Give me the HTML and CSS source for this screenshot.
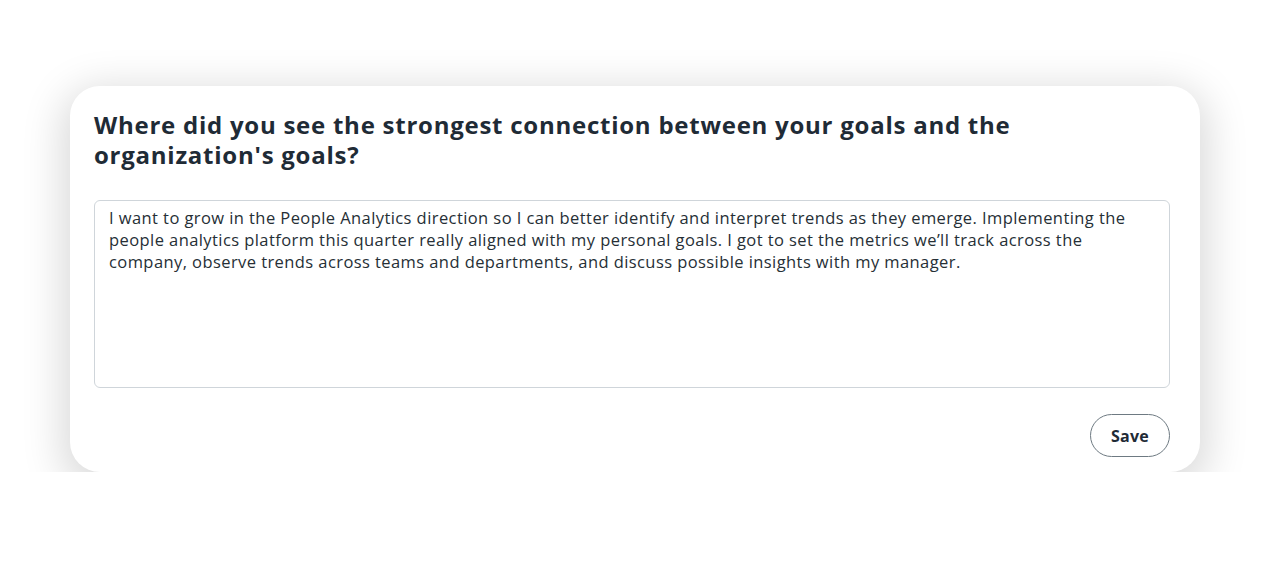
FILE: index.html
```html
<!DOCTYPE html>
<html>
  <head>
    <meta charset="utf-8">
    <link rel="stylesheet" href="styles.css">
  </head>
  <body>
    <div class="card">
      <h2 class="question">Where did you see the strongest connection between your goals and the organization's goals?</h2>
      <div class="answer">I want to grow in the People Analytics direction so I can better identify and interpret trends as they emerge. Implementing the people analytics platform this quarter really aligned with my personal goals. I got to set the metrics we’ll track across the company, observe trends across teams and departments, and discuss possible insights with my manager.</div>
      <div class="actions">
        <button class="save">Save</button>
      </div>
    </div>
  </body>
</html>
```

FILE: styles.css
```css
body { margin: 0; background: #fff; font-family: "Open Sans", sans-serif; }
.card {
  box-sizing: border-box;
  width: 1130px;
  height: 386px;
  margin: 86px 0 0 70px;
  padding: 24px 30px 0 24px;
  background: #fff;
  border-radius: 30px;
  box-shadow: 0 10px 40px 8px rgba(0, 0, 0, 0.15);
}
.question {
  margin: 0;
  width: 960px;
  font-size: 24px;
  line-height: 30px;
  font-weight: 700;
  letter-spacing: 0.75px;
  color: #1f2b36;
}
.answer {
  box-sizing: border-box;
  height: 188px;
  margin-top: 30px;
  padding: 6px 14px;
  border: 1px solid #cfd5da;
  border-radius: 6px;
  font-size: 16.5px;
  line-height: 22px;
  letter-spacing: 0.42px;
  color: #262f36;
}
.actions { display: flex; justify-content: flex-end; margin-top: 26px; }
.save {
  width: 80px;
  height: 43px;
  border: 1.5px solid #6e7a82;
  border-radius: 22px;
  background: #fff;
  font-family: "Open Sans", sans-serif;
  font-size: 16px;
  font-weight: 700;
  letter-spacing: 0.3px;
  color: #1f2b36;
}
```
